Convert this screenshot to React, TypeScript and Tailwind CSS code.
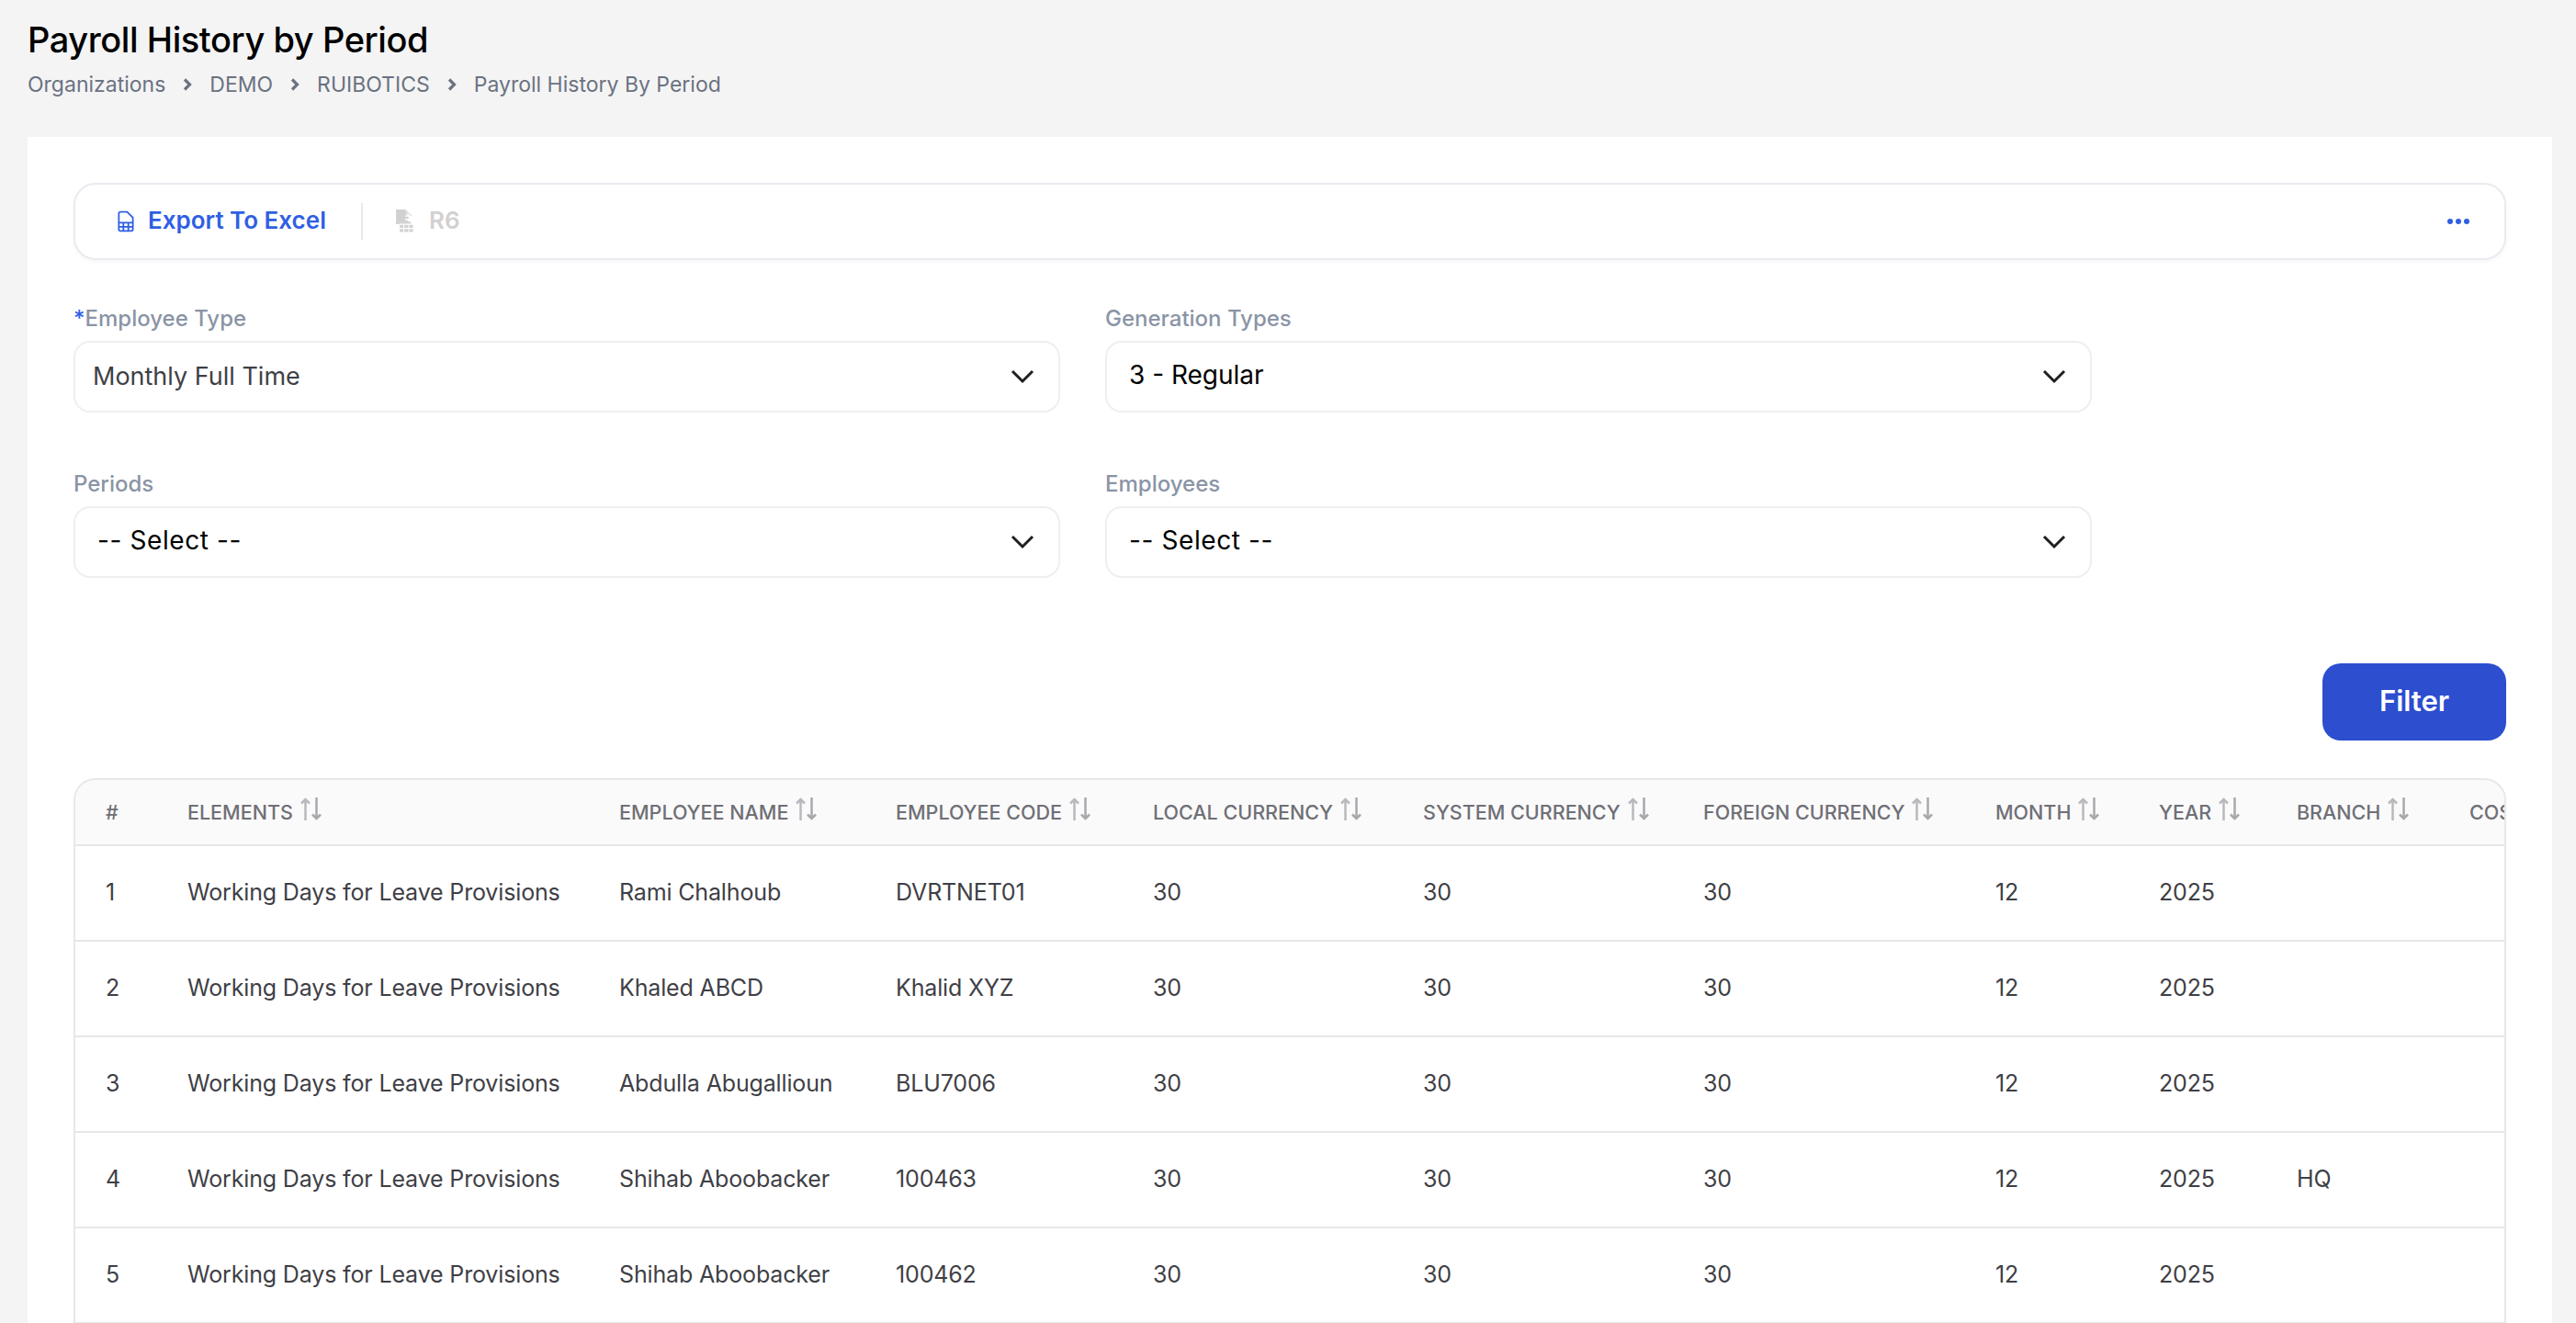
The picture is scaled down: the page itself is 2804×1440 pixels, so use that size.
const FONT = "font-['Inter',sans-serif]"

const COLUMNS = [
  { label: '#', width: 'w-[89px]', sort: false },
  { label: 'ELEMENTS', width: 'w-[470px]', sort: true },
  { label: 'EMPLOYEE NAME', width: 'w-[301px]', sort: true },
  { label: 'EMPLOYEE CODE', width: 'w-[280px]', sort: true },
  { label: 'LOCAL CURRENCY', width: 'w-[294px]', sort: true },
  { label: 'SYSTEM CURRENCY', width: 'w-[305px]', sort: true },
  { label: 'FOREIGN CURRENCY', width: 'w-[318px]', sort: true },
  { label: 'MONTH', width: 'w-[178px]', sort: true },
  { label: 'YEAR', width: 'w-[150px]', sort: true },
  { label: 'BRANCH', width: 'w-[188px]', sort: true },
  { label: 'COST CENTER', width: 'w-[260px]', sort: true },
]

const ROWS = [
  { name: 'Rami Chalhoub', code: 'DVRTNET01', branch: '' },
  { name: 'Khaled ABCD', code: 'Khalid XYZ', branch: '' },
  { name: 'Abdulla Abugallioun', code: 'BLU7006', branch: '' },
  { name: 'Shihab Aboobacker', code: '100463', branch: 'HQ' },
  { name: 'Shihab Aboobacker', code: '100462', branch: '' },
]

function Chevron() {
  return (
    <svg width="26" height="16" viewBox="0 0 26 16" fill="none" className="shrink-0">
      <path d="M2 2l11 11L24 2" stroke="#1f1f1f" strokeWidth="3" />
    </svg>
  )
}

function SortIcon() {
  return (
    <svg width="23" height="25" viewBox="0 0 23 25" fill="none" className="ml-[8px] -mt-[8px] shrink-0">
      <path d="M5.500 25V2M1 6.500l4.500-4.500L10 6.500" stroke="#b9b9bd" strokeWidth="2.500" />
      <path d="M17.500 0v23M13 18.500l4.500 4.500 4.500-4.500" stroke="#a8a8ad" strokeWidth="2.500" />
    </svg>
  )
}

function Crumb({ children }: { children: string }) {
  return <span className="text-[#6b7280]">{children}</span>
}

function CrumbArrow() {
  return (
    <svg width="10" height="14" viewBox="0 0 10 14" fill="none" className="mx-[19px]">
      <path d="M2 1.500L7.500 7 2 12.500" stroke="#6b7280" strokeWidth="3.200" />
    </svg>
  )
}

function SelectField({ label, value, required, tone }: { label: string; value: string; required?: boolean; tone: 'muted' | 'value' | 'placeholder' }) {
  const textClass = {
    muted: 'text-[27px] text-[#3f3f46] -ml-[1px] mt-[1px]',
    value: 'text-[28px] text-black -mt-[5px] ml-[4px]',
    placeholder: 'text-[28px] tracking-[0.6px] text-black -mt-[5px] ml-[4px]',
  }[tone]

  return (
    <div>
      <div className="h-[39px] text-[24px] leading-[30px] font-medium text-[#8a94a6]">
        {required && <span className="text-[#2f5fe3]">*</span>}
        {label}
      </div>
      <div className="flex h-[78px] items-center justify-between rounded-[18px] border-2 border-[#efeff1] pr-[26px] pl-[20px]">
        <span className={textClass}>{value}</span>
        <Chevron />
      </div>
    </div>
  )
}

export default function App() {
  return (
    <div className={`${FONT} h-[1440px] overflow-hidden bg-[#f4f4f5]`}>
      <div className="h-[149px] px-[30px] pt-[18px]">
        <h1 className="text-[38px] leading-[50px] font-medium tracking-[-0.43px] text-black">Payroll History by Period</h1>
        <div className="mt-[7px] flex items-center text-[23px] leading-[34px]">
          <Crumb>Organizations</Crumb>
          <CrumbArrow />
          <Crumb>DEMO</Crumb>
          <CrumbArrow />
          <Crumb>RUIBOTICS</Crumb>
          <CrumbArrow />
          <Crumb>Payroll History By Period</Crumb>
        </div>
      </div>

      <div className="mr-[26px] ml-[30px] h-[1291px] bg-white px-[50px] pt-[50px]">
        <div className="flex h-[84px] items-center justify-between rounded-[24px] border-2 border-[#e8ebf0] pr-[38px] pl-[46px] shadow-[0_2px_4px_rgba(0,0,0,0.04)]">
          <div className="flex items-center">
            <div className="flex items-center gap-[15px] text-[26px] leading-[38px] font-semibold text-[#2f5fe3]">
              <svg width="18" height="24" viewBox="0 0 20 26" fill="none" stroke="currentColor" strokeWidth="2">
                <path d="M3.500 1.500h8l7 7v14a2 2 0 0 1-2 2h-13a2 2 0 0 1-2-2v-19a2 2 0 0 1 2-2z" />
                <path d="M1.500 14.500h17M1.500 19.500h17M7 14.500v10M13 14.500v10" />
              </svg>
              <span className="-mt-[2px]">Export To Excel</span>
            </div>
            <div className="mr-[35px] ml-[38px] h-[40px] w-[2px] bg-[#e8e8ea]" />
            <div className="flex items-center gap-[15px] text-[26px] leading-[38px] font-semibold text-[#d3d0d1]">
              <svg width="22" height="27" viewBox="0 0 24 30" fill="#d3d0d1" className="-mt-[2px]">
                <path d="M1 1h11l4 4v11h3v6H5v-3H1z" />
                <path d="M13 1l8 8h-8z" fill="#e6e4e5" />
                <path d="M12 9h5l-2-2M12 13h5l-2 2" stroke="#fff" strokeWidth="1.500" fill="none" />
                <path d="M5 19h17v9a1 1 0 0 1-1 1H6a1 1 0 0 1-1-1zM10.500 19v10M16.500 19v10M5 24h17" stroke="#fff" strokeWidth="1.200" />
              </svg>
              <span className="-mt-[2px]">R6</span>
            </div>
          </div>
          <div className="flex gap-[3px]">
            <span className="h-[6px] w-[6px] rounded-full bg-[#2f5fe3]" />
            <span className="h-[6px] w-[6px] rounded-full bg-[#2f5fe3]" />
            <span className="h-[6px] w-[6px] rounded-full bg-[#2f5fe3]" />
          </div>
        </div>

        <div className="mt-[49px] grid w-[2197px] grid-cols-[1074px_1074px] gap-x-[49px] gap-y-[63px]">
          <SelectField label="Employee Type" value="Monthly Full Time" required tone="muted" />
          <SelectField label="Generation Types" value="3 - Regular" tone="value" />
          <SelectField label="Periods" value="-- Select --" tone="placeholder" />
          <SelectField label="Employees" value="-- Select --" tone="placeholder" />
        </div>

        <div className="mt-[93px] flex justify-end">
          <button className="h-[84px] w-[200px] rounded-[20px] bg-[#2c4ecf] text-[31px] font-semibold text-white">
            <span className="relative -top-[1px]">Filter</span>
          </button>
        </div>

        <div className="mt-[41px] overflow-hidden rounded-t-[24px] border-x-2 border-t-2 border-[#e7e7e7]">
          <table className="w-max table-fixed border-collapse text-left">
            <thead>
              <tr className="h-[71px] border-b-2 border-[#e7e7e7] bg-[#fafafa]">
                {COLUMNS.map((c) => (
                  <th key={c.label} className={`${c.width} pl-[33px] text-[21.5px] font-medium whitespace-nowrap text-[#6f6f76]`}>
                    <span className="flex items-center">
                      {c.label}
                      {c.sort && <SortIcon />}
                    </span>
                  </th>
                ))}
              </tr>
            </thead>
            <tbody>
              {ROWS.map((r, i) => (
                <tr key={i} className="h-[104px] border-b-2 border-[#e7e7e7] text-[25px] tracking-[-0.15px] text-[#3f3f46]">
                  <td className="pl-[33px]">{i + 1}</td>
                  <td className="pl-[33px] whitespace-nowrap">Working Days for Leave Provisions</td>
                  <td className="pl-[33px] whitespace-nowrap">{r.name}</td>
                  <td className="pl-[33px]">{r.code}</td>
                  <td className="pl-[33px]">30</td>
                  <td className="pl-[33px]">30</td>
                  <td className="pl-[33px]">30</td>
                  <td className="pl-[33px]">12</td>
                  <td className="pl-[33px]">2025</td>
                  <td className="pl-[33px]">{r.branch}</td>
                  <td className="pl-[33px]"></td>
                </tr>
              ))}
            </tbody>
          </table>
        </div>
      </div>
    </div>
  )
}
